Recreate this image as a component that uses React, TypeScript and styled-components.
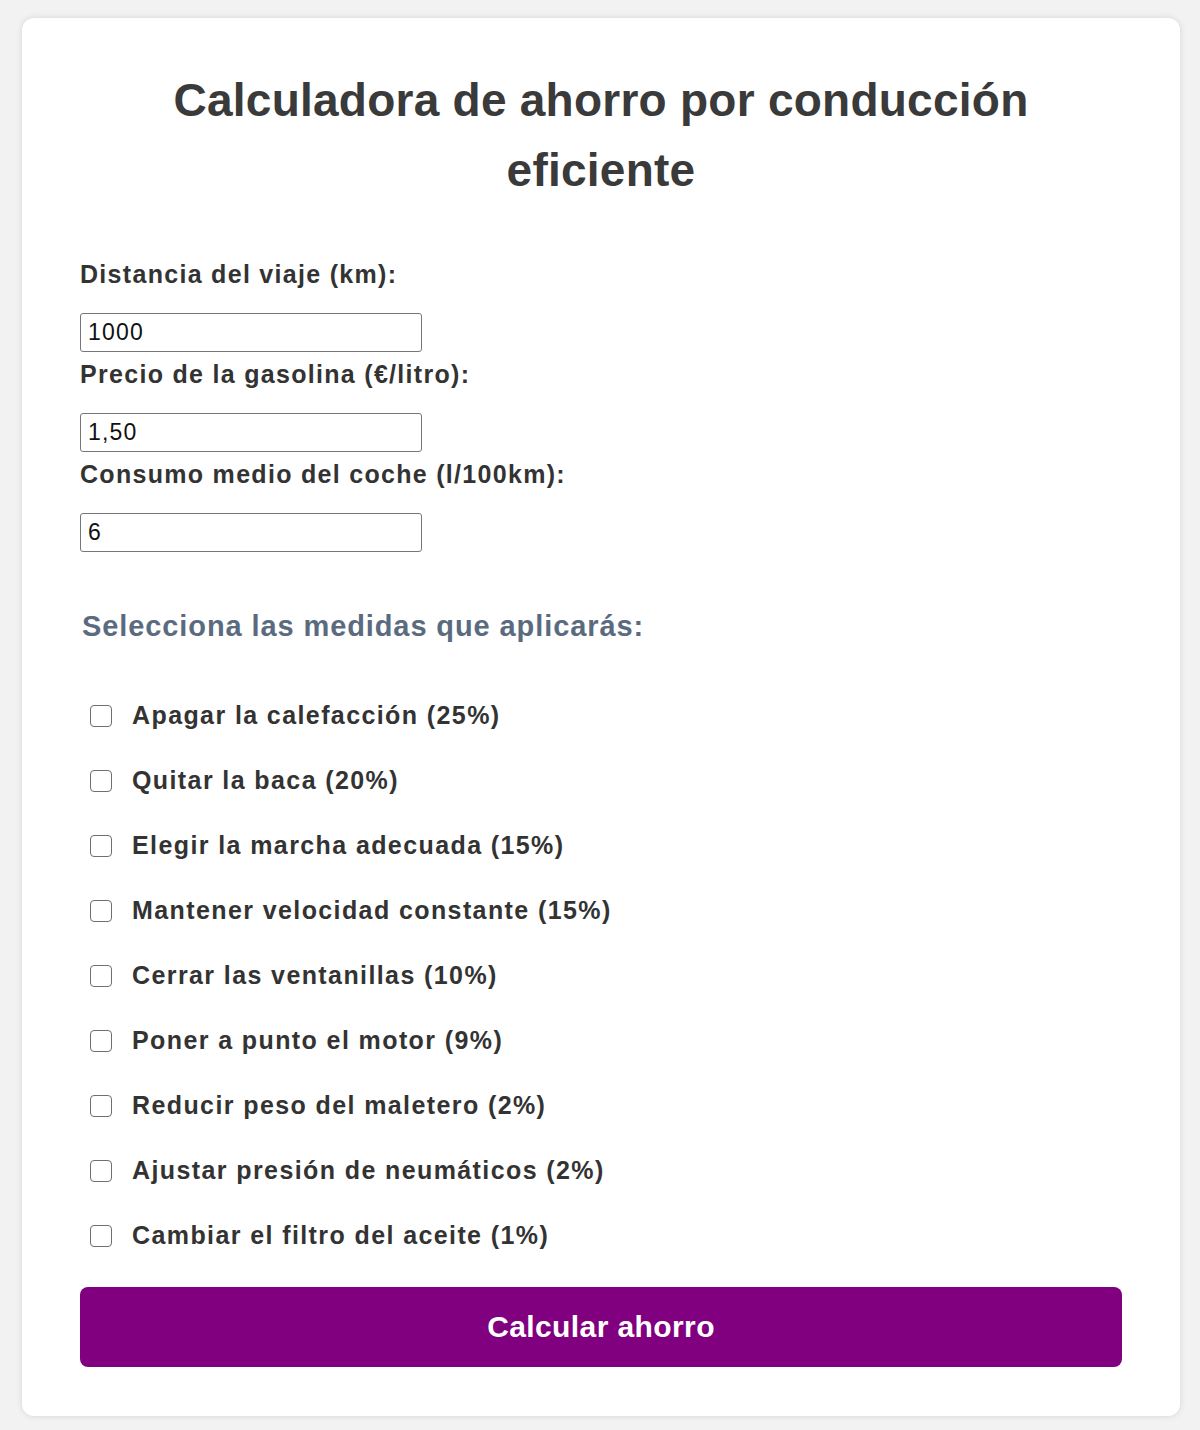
import React from 'react'
import styled, { createGlobalStyle } from 'styled-components'

const GlobalStyle = createGlobalStyle`
    body {
        margin: 0;
        background: #f2f2f2;
        font-family: 'Liberation Sans', Arial, sans-serif;
    }
`

const Page = styled.div`
    padding: 18px 20px 14px 22px;
`

const Card = styled.div`
    background: #ffffff;
    border-radius: 12px;
    box-shadow: 0 0 6px rgba(0, 0, 0, 0.12);
    padding: 47px 58px 49px 58px;
    box-sizing: border-box;
`

const Title = styled.h2`
    margin: 0 0 55px 0;
    text-align: center;
    font-size: 46px;
    line-height: 70px;
    font-weight: bold;
    letter-spacing: 0.25px;
    color: #3a3a3a;
    padding: 0 60px;
`

const Form = styled.div`
    display: flex;
    flex-direction: column;
`

const Label = styled.label`
    font-size: 25px;
    line-height: 28px;
    font-weight: bold;
    letter-spacing: 1.3px;
    color: #333333;
    margin-bottom: 25px;
`

const Input = styled.input`
    width: 342px;
    height: 39px;
    box-sizing: border-box;
    border: 1px solid #767676;
    border-radius: 3px;
    padding: 0 7px;
    font-family: 'Liberation Sans', Arial, sans-serif;
    font-size: 23px;
    letter-spacing: 1.2px;
    color: #111111;
    margin-bottom: 8px;
`

const SubTitle = styled.h3`
    margin: 50px 0 41px 2px;
    font-size: 29px;
    line-height: 32px;
    font-weight: bold;
    letter-spacing: 0.9px;
    color: #5b6b7f;
`

const Option = styled.label`
    display: flex;
    align-items: center;
    height: 65px;
    padding-left: 10px;
    gap: 20px;
    font-size: 25px;
    font-weight: bold;
    letter-spacing: 1.4px;
    color: #333333;
`

const Box = styled.input`
    appearance: none;
    margin: 0;
    width: 22px;
    height: 22px;
    border: 1.5px solid #6f6f6f;
    border-radius: 4px;
    background: #ffffff;
    flex-shrink: 0;
`

const Button = styled.button`
    margin-top: 19px;
    width: 100%;
    height: 80px;
    border: none;
    border-radius: 8px;
    background: #800080;
    color: #ffffff;
    font-family: 'Liberation Sans', Arial, sans-serif;
    font-size: 30px;
    font-weight: bold;
    letter-spacing: 0.4px;
`

const measures = [
    'Apagar la calefacción (25%)',
    'Quitar la baca (20%)',
    'Elegir la marcha adecuada (15%)',
    'Mantener velocidad constante (15%)',
    'Cerrar las ventanillas (10%)',
    'Poner a punto el motor (9%)',
    'Reducir peso del maletero (2%)',
    'Ajustar presión de neumáticos (2%)',
    'Cambiar el filtro del aceite (1%)',
]

const App = () => {
    return (
        <Page>
            <GlobalStyle />
            <Card>
                <Title>Calculadora de ahorro por conducción eficiente</Title>
                <Form>
                    <Label htmlFor='distancia'>Distancia del viaje (km):</Label>
                    <Input id='distancia' type='text' defaultValue='1000' />
                    <Label htmlFor='precio'>Precio de la gasolina (€/litro):</Label>
                    <Input id='precio' type='text' defaultValue='1,50' />
                    <Label htmlFor='consumo'>Consumo medio del coche (l/100km):</Label>
                    <Input id='consumo' type='text' defaultValue='6' />
                    <SubTitle>Selecciona las medidas que aplicarás:</SubTitle>
                    {measures.map((m) => (
                        <Option key={m}>
                            <Box type='checkbox' />
                            {m}
                        </Option>
                    ))}
                    <Button>Calcular ahorro</Button>
                </Form>
            </Card>
        </Page>
    )
}

export default App
